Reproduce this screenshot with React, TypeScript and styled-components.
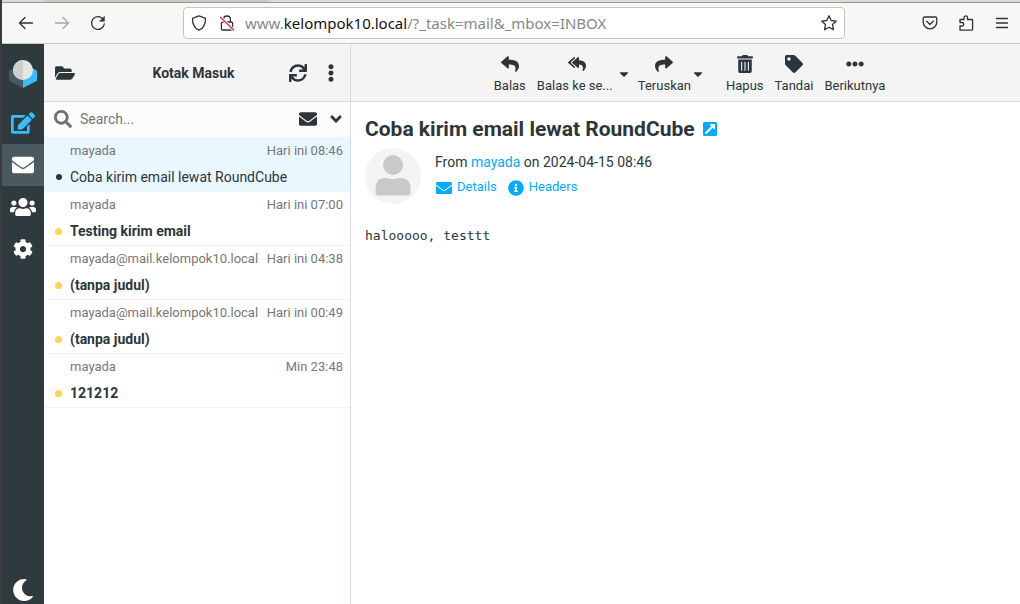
import React from "react";
import styled, { createGlobalStyle } from "styled-components";
import {
  FaFolderOpen,
  FaSync,
  FaEllipsisV,
  FaEllipsisH,
  FaSearch,
  FaEnvelope,
  FaAngleDown,
  FaEdit,
  FaUsers,
  FaCog,
  FaMoon,
  FaReply,
  FaReplyAll,
  FaShare,
  FaTrashAlt,
  FaTag,
  FaCaretDown,
  FaExternalLinkSquareAlt,
  FaInfoCircle,
} from "react-icons/fa";

const ink = "#2c363a";
const line = "#d4dbde";
const accent = "#00acff";

const GlobalStyle = createGlobalStyle`
  *, *::before, *::after { box-sizing: border-box; }
  body { margin: 0; background: #fff; color: ${ink}; font: 14px/20px Roboto, sans-serif; }
  button { border: 0; padding: 0; margin: 0; background: none; color: inherit; font: inherit; cursor: pointer; }
  a { color: inherit; text-decoration: none; }
  svg { display: block; flex: none; }
`;

const Window = styled.div`
  display: flex;
  flex-direction: column;
  min-height: 100vh;
  border-left: 2px solid #3b3a3d;
`;

const TabStrip = styled.div`
  height: 3px;
  display: flex;
  background: #dedad9;
  border-bottom: 1px solid #9b9694;
`;

const InactiveTab = styled.div`
  width: 224px;
  margin-left: 43px;
  background: #cdc7c5;
`;

const BrowserBar = styled.header`
  display: flex;
  align-items: center;
  height: 41px;
  padding: 0 7px 0 13px;
  background: #f7f7f5;
  border-bottom: 1px solid #cacbc1;
`;

const BrowserButton = styled.button<{ $faded?: boolean }>`
  display: grid;
  place-items: center;
  width: 22px;
  height: 22px;
  margin-right: 14px;
  color: #2e3436;
  opacity: ${(p) => (p.$faded ? 0.4 : 1)};
`;

const AddressBox = styled.div`
  display: flex;
  align-items: center;
  gap: 8px;
  flex: 1;
  height: 32px;
  margin: 0 74px 0 60px;
  padding: 0 5px;
  background: #fff;
  border: 1px solid #c9c3bd;
  border-radius: 4px;
  color: #2e3436;
`;

const Address = styled.div`
  flex: 1;
  white-space: nowrap;
  font: 15px/24px "Noto Sans", sans-serif;
  color: #85888a;

  strong {
    font-weight: 400;
    color: #101214;
  }
`;

const BrowserTools = styled.div`
  display: flex;
  gap: 14px;

  button {
    margin: 0;
  }
`;

const Mail = styled.div`
  display: flex;
  flex: 1;
`;

const Rail = styled.nav`
  display: flex;
  flex-direction: column;
  width: 42px;
  background: #2f3a3f;
  color: #fff;
`;

const Logo = styled.div`
  display: grid;
  place-items: center;
  height: 58px;
  padding-top: 2px;
`;

const RailButton = styled.button<{ $active?: boolean; $tone?: string; $last?: boolean }>`
  display: grid;
  place-items: center;
  height: ${(p) => (p.$last ? "28px" : "42px")};
  margin-top: ${(p) => (p.$last ? "auto" : "0")};
  color: ${(p) => p.$tone ?? "#fff"};
  background: ${(p) => (p.$active ? "#4b5a61" : "none")};
`;

const ListPane = styled.section`
  width: 307px;
  border-right: 1px solid ${line};
`;

const ListHeader = styled.div`
  display: flex;
  align-items: center;
  height: 58px;
  padding: 0 9px 0 11px;
  background: #f4f4f4;
  border-bottom: 1px solid ${line};
`;

const ListTitle = styled.h2`
  flex: 1;
  margin: 0 0 0 24px;
  text-align: center;
  font-size: 14px;
  font-weight: 700;
  line-height: 20px;
`;

const IconButton = styled.button`
  display: grid;
  place-items: center;
  min-width: 20px;
  height: 24px;
`;

const HeaderActions = styled.div<{ $tight?: boolean }>`
  display: flex;
  gap: ${(p) => (p.$tight ? "8px" : "13px")};
`;

const SearchBar = styled.form`
  display: flex;
  align-items: center;
  height: 36px;
  padding: 0 4px 1px 10px;
  background: #fcfcfc;
  border-bottom: 1px solid #f1f3f4;
  color: ${ink};

  label {
    color: #6d7375;
  }
`;

const SearchInput = styled.input`
  flex: 1;
  min-width: 0;
  padding: 0 8px;
  border: 0;
  outline: 0;
  background: none;
  font: 14px/20px Roboto, sans-serif;
  color: ${ink};

  &::placeholder {
    color: #757575;
    opacity: 1;
  }
`;

const Messages = styled.ul`
  margin: 0;
  padding: 0;
  list-style: none;
`;

const Message = styled.li<{ $selected?: boolean }>`
  padding: 3px 7px 4px 11px;
  background: ${(p) => (p.$selected ? "#e9f7ff" : "#fff")};
  border-bottom: 1px solid #f1f3f4;
`;

const MessageMeta = styled.div`
  display: flex;
  justify-content: space-between;
  padding-left: 15px;
  font-size: 13px;
  line-height: 20px;
  color: #777;
`;

const Subject = styled.a<{ $unread: boolean }>`
  display: flex;
  align-items: center;
  gap: 8px;
  padding: 6px 0 0 ${(p) => (p.$unread ? "0" : "1px")};
  font-weight: ${(p) => (p.$unread ? 700 : 400)};
  line-height: 20px;

  &::before {
    content: "";
    width: ${(p) => (p.$unread ? "7px" : "6px")};
    height: ${(p) => (p.$unread ? "7px" : "6px")};
    border-radius: 50%;
    background: ${(p) => (p.$unread ? "#ffd452" : ink)};
  }
`;

const Reader = styled.main`
  flex: 1;
  min-width: 0;
`;

const Toolbar = styled.div`
  display: flex;
  justify-content: center;
  height: 58px;
  padding: 11px 0 0 7px;
  background: #f4f4f4;
  border-bottom: 1px solid ${line};
`;

const ToolButton = styled.button`
  display: flex;
  flex-direction: column;
  align-items: center;
  gap: 3px;
  height: 41px;
  padding: 0 5px 0 6px;
  font-size: 13px;
  line-height: 20px;

  svg {
    width: auto;
    height: 18px;
  }
`;

const ToolLabel = styled.span<{ $wide?: boolean }>`
  min-width: ${(p) => (p.$wide ? "80px" : "0")};
  text-align: left;
  white-space: nowrap;
`;

const SplitTool = styled.div<{ $spaced?: boolean }>`
  display: flex;
  margin-right: ${(p) => (p.$spaced ? "14px" : "0")};

  > button:first-child {
    padding-right: 0;
  }
`;

const CaretButton = styled.button`
  display: grid;
  place-items: center;
  width: 14px;
  height: 38px;
  margin-right: 1px;
`;

const Letter = styled.article`
  padding: 14px;
`;

const LetterTitle = styled.h1`
  display: flex;
  align-items: center;
  gap: 7px;
  margin: 0;
  font-size: 21px;
  font-weight: 700;
  line-height: 26px;

  a {
    color: ${accent};
  }
`;

const LetterHead = styled.div`
  display: flex;
  gap: 14px;
  margin-top: 6px;
`;

const Sender = styled.p`
  margin: 4px 0 5px;
  line-height: 20px;

  a {
    color: ${accent};
  }
`;

const HeaderLinks = styled.div`
  display: flex;
  gap: 11px;
  padding-left: 1px;
  font-size: 13px;
  line-height: 20px;
  color: ${accent};

  a {
    display: flex;
    align-items: center;
    gap: 5px;
  }

  svg {
    margin-top: 2px;
  }
`;

const Body = styled.pre`
  margin: 22px 0 0;
  font: 13px/20px "DejaVu Sans Mono", monospace;
`;

const messages = [
  { from: "mayada", date: "Hari ini 08:46", subject: "Coba kirim email lewat RoundCube", unread: false },
  { from: "mayada", date: "Hari ini 07:00", subject: "Testing kirim email", unread: true },
  { from: "mayada@mail.kelompok10.local", date: "Hari ini 04:38", subject: "(tanpa judul)", unread: true },
  { from: "mayada@mail.kelompok10.local", date: "Hari ini 00:49", subject: "(tanpa judul)", unread: true },
  { from: "mayada", date: "Min 23:48", subject: "121212", unread: true },
];

const Glyph = ({ children }: { children: React.ReactNode }) => (
  <svg
    width="16"
    height="16"
    viewBox="0 0 16 16"
    fill="none"
    stroke="currentColor"
    strokeWidth="1.3"
    strokeLinecap="round"
    strokeLinejoin="round"
  >
    {children}
  </svg>
);

const RoundcubeLogo = () => (
  <svg width="28" height="28" viewBox="0 0 28 28">
    <path d="M0 10.7 14 3V28L0 20.7z" fill="#465a63" />
    <path d="M28 10.7 14 3V28L28 20.7z" fill="#37beff" />
    <circle cx="14" cy="10" r="10" fill="#e5e5e5" />
    <path d="M14 0a10 10 0 0 0 0 20z" fill="#cfcfcf" />
  </svg>
);

const Avatar = () => (
  <svg width="56" height="56" viewBox="0 0 56 56" role="img" aria-label="mayada">
    <circle cx="28" cy="28" r="28" fill="#f4f4f4" />
    <circle cx="28" cy="17" r="10" fill="#c9c9c9" />
    <path
      d="M20 30c3 0 4 1 8 1s5-1 8-1c6 0 9.5 4 9.5 10v4.5a3 3 0 0 1-3 3h-29a3 3 0 0 1-3-3V40c0-6 3.5-10 9.5-10z"
      fill="#c9c9c9"
    />
  </svg>
);

export default function App() {
  return (
    <Window>
      <GlobalStyle />
      <TabStrip>
        <InactiveTab />
      </TabStrip>
      <BrowserBar>
        <BrowserButton aria-label="Back">
          <Glyph>
            <path d="M14.5 8H1.5M7 2.5 1.5 8 7 13.5" />
          </Glyph>
        </BrowserButton>
        <BrowserButton aria-label="Forward" $faded>
          <Glyph>
            <path d="M1.5 8h13M9 2.5 14.5 8 9 13.5" />
          </Glyph>
        </BrowserButton>
        <BrowserButton aria-label="Reload">
          <Glyph>
            <path d="M14.3 9A6.4 6.4 0 1 1 12.6 3.6" />
            <path d="M14.4 1.6v4.6H9.8z" fill="currentColor" strokeWidth="0.6" />
          </Glyph>
        </BrowserButton>
        <AddressBox>
          <IconButton as="span">
            <Glyph>
              <path d="M8 .9 14.5 3.4C14.6 9 12.4 13.2 8 15.2 3.6 13.2 1.4 9 1.5 3.4z" />
            </Glyph>
          </IconButton>
          <IconButton as="span">
            <Glyph>
              <path d="M4.6 7V4.4a3.4 3.4 0 0 1 6.8 0V7M3.6 7h8.8a1.2 1.2 0 0 1 1.2 1.2v5.6a1.2 1.2 0 0 1-1.2 1.2H3.6a1.2 1.2 0 0 1-1.2-1.2V8.2A1.2 1.2 0 0 1 3.6 7z" />
              <path d="M1.4 2.2 14.6 15" stroke="#fff" strokeWidth="3" />
              <path d="M1.4 2.2 14.6 15" stroke="#e22850" />
            </Glyph>
          </IconButton>
          <Address>
            www.<strong>kelompok10.local</strong>/?_task=mail&amp;_mbox=INBOX
          </Address>
          <IconButton aria-label="Bookmark this page">
            <Glyph>
              <path d="M8 .8 10.2 5.5 15.3 6.1 11.5 9.6 12.5 14.8 8 12.2 3.5 14.8 4.5 9.6 .7 6.1 5.8 5.5z" />
            </Glyph>
          </IconButton>
        </AddressBox>
        <BrowserTools>
          <BrowserButton aria-label="Save to Pocket">
            <Glyph>
              <path d="M2.7 2h10.6a1.5 1.5 0 0 1 1.5 1.5V7a6.8 6.8 0 0 1-13.6 0V3.5A1.5 1.5 0 0 1 2.7 2zM4.7 6.3 8 9.5l3.3-3.2" />
            </Glyph>
          </BrowserButton>
          <BrowserButton aria-label="Extensions">
            <Glyph>
              <path d="M2 15.2V11h2a1.7 1.7 0 0 0 0-3.5H2V4.5h4V2.6a1.7 1.7 0 0 1 3.5 0v1.9h4.3a.8.8 0 0 1 .8.8v9.1a.8.8 0 0 1-.8.8z" />
            </Glyph>
          </BrowserButton>
          <BrowserButton aria-label="Open application menu">
            <Glyph>
              <path d="M2.5 3.5h11M2.5 8h11M2.5 12.5h11" />
            </Glyph>
          </BrowserButton>
        </BrowserTools>
      </BrowserBar>

      <Mail>
        <Rail>
          <Logo>
            <RoundcubeLogo />
          </Logo>
          <RailButton aria-label="Compose" $tone="#37beff">
            <FaEdit size={24} />
          </RailButton>
          <RailButton aria-label="Mail" $active>
            <FaEnvelope size={22} />
          </RailButton>
          <RailButton aria-label="Contacts">
            <FaUsers size={26} />
          </RailButton>
          <RailButton aria-label="Settings">
            <FaCog size={20} />
          </RailButton>
          <RailButton aria-label="Dark mode" $last>
            <FaMoon size={22} />
          </RailButton>
        </Rail>

        <ListPane>
          <ListHeader>
            <IconButton aria-label="Folders">
              <FaFolderOpen size={20} />
            </IconButton>
            <ListTitle>Kotak Masuk</ListTitle>
            <HeaderActions>
              <IconButton aria-label="Refresh">
                <FaSync size={18} />
              </IconButton>
              <IconButton aria-label="List options">
                <FaEllipsisV size={18} />
              </IconButton>
            </HeaderActions>
          </ListHeader>
          <SearchBar>
            <label htmlFor="search" aria-label="Search">
              <FaSearch size={18} />
            </label>
            <SearchInput id="search" placeholder="Search..." />
            <HeaderActions $tight>
              <IconButton type="button" aria-label="Unread messages">
                <FaEnvelope size={18} />
              </IconButton>
              <IconButton type="button" aria-label="Search options">
                <FaAngleDown size={18} />
              </IconButton>
            </HeaderActions>
          </SearchBar>
          <Messages>
            {messages.map((m, i) => (
              <Message key={m.date} $selected={i === 0}>
                <MessageMeta>
                  <span>{m.from}</span>
                  <span>{m.date}</span>
                </MessageMeta>
                <Subject href="#message" $unread={m.unread}>
                  {m.subject}
                </Subject>
              </Message>
            ))}
          </Messages>
        </ListPane>

        <Reader>
          <Toolbar>
            <ToolButton>
              <FaReply />
              <ToolLabel>Balas</ToolLabel>
            </ToolButton>
            <SplitTool>
              <ToolButton>
                <FaReplyAll />
                <ToolLabel $wide>Balas ke se...</ToolLabel>
              </ToolButton>
              <CaretButton aria-label="Reply options">
                <FaCaretDown size={14} />
              </CaretButton>
            </SplitTool>
            <SplitTool $spaced>
              <ToolButton>
                <FaShare />
                <ToolLabel>Teruskan</ToolLabel>
              </ToolButton>
              <CaretButton aria-label="Forward options">
                <FaCaretDown size={14} />
              </CaretButton>
            </SplitTool>
            <ToolButton>
              <FaTrashAlt />
              <ToolLabel>Hapus</ToolLabel>
            </ToolButton>
            <ToolButton>
              <FaTag />
              <ToolLabel>Tandai</ToolLabel>
            </ToolButton>
            <ToolButton>
              <FaEllipsisH />
              <ToolLabel>Berikutnya</ToolLabel>
            </ToolButton>
          </Toolbar>
          <Letter id="message">
            <LetterTitle>
              Coba kirim email lewat RoundCube
              <a href="#open" aria-label="Open in new window">
                <FaExternalLinkSquareAlt size={16} />
              </a>
            </LetterTitle>
            <LetterHead>
              <Avatar />
              <div>
                <Sender>
                  From <a href="#mayada">mayada</a> on 2024-04-15 08:46
                </Sender>
                <HeaderLinks>
                  <a href="#details">
                    <FaEnvelope size={16} />
                    Details
                  </a>
                  <a href="#headers">
                    <FaInfoCircle size={16} />
                    Headers
                  </a>
                </HeaderLinks>
              </div>
            </LetterHead>
            <Body>halooooo, testtt</Body>
          </Letter>
        </Reader>
      </Mail>
    </Window>
  );
}
